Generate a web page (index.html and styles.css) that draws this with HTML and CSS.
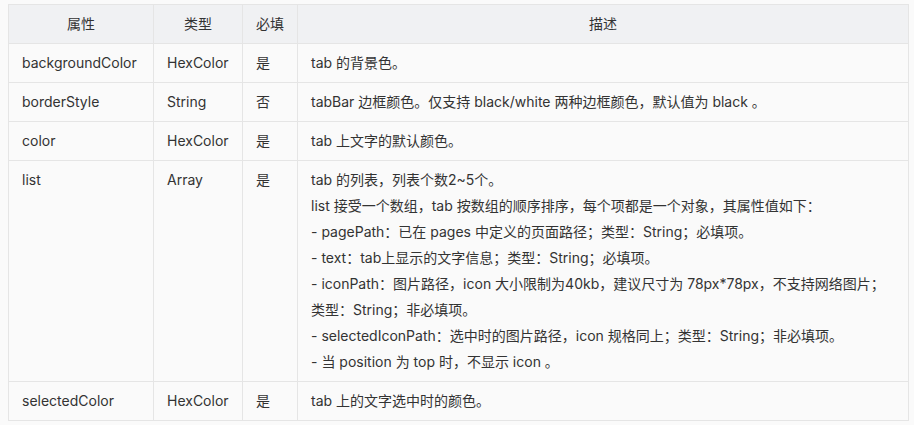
FILE: index.html
```html
<!DOCTYPE html>
<html lang="zh-CN">
<head>
<meta charset="utf-8">
<link rel="stylesheet" href="styles.css">
</head>
<body>
<div class="wrap">
<table class="props">
  <colgroup>
    <col class="c1"><col class="c2"><col class="c3"><col class="c4">
  </colgroup>
  <thead>
    <tr><th>属性</th><th>类型</th><th>必填</th><th>描述</th></tr>
  </thead>
  <tbody>
    <tr><td>backgroundColor</td><td>HexColor</td><td>是</td><td>tab 的背景色。</td></tr>
    <tr><td>borderStyle</td><td>String</td><td>否</td><td>tabBar 边框颜色。仅支持 black/white 两种边框颜色，默认值为 black 。</td></tr>
    <tr><td>color</td><td>HexColor</td><td>是</td><td>tab 上文字的默认颜色。</td></tr>
    <tr><td>list</td><td>Array</td><td>是</td><td>tab 的列表，列表个数2~5个。<br>list 接受一个数组，tab 按数组的顺序排序，每个项都是一个对象，其属性值如下：<br>- pagePath：已在 pages 中定义的页面路径；类型：String；必填项。<br>- text：tab上显示的文字信息；类型：String；必填项。<br>- iconPath：图片路径，icon 大小限制为40kb，建议尺寸为 78px*78px，不支持网络图片；类型：String；非必填项。<br>- selectedIconPath：选中时的图片路径，icon 规格同上；类型：String；非必填项。<br>- 当 position 为 top 时，不显示 icon 。</td></tr>
    <tr><td>selectedColor</td><td>HexColor</td><td>是</td><td>tab 上的文字选中时的颜色。</td></tr>
  </tbody>
</table>
</div>
</body>
</html>
```
FILE: styles.css
```css
html, body {
  margin: 0;
  padding: 0;
  background: #fafafa;
}
.wrap {
  padding: 4px 6px 0 8px;
}
.props {
  width: 900px;
  table-layout: fixed;
  border-collapse: collapse;
  font-family: Inter, "Noto Sans CJK SC", sans-serif;
  font-size: 14px;
  line-height: 26px;
  color: #333;
  background: #fafafa;
}
.c1 { width: 145px; }
.c2 { width: 89px; }
.c3 { width: 55px; }
.c4 { width: 611px; }
.props th, .props td {
  border: 1px solid #e5e5e5;
  padding: 6px 13px;
  vertical-align: top;
  text-align: left;
  word-break: break-all;
}
.props th {
  background: #f0f1f3;
  font-weight: normal;
  text-align: center;
}
```
